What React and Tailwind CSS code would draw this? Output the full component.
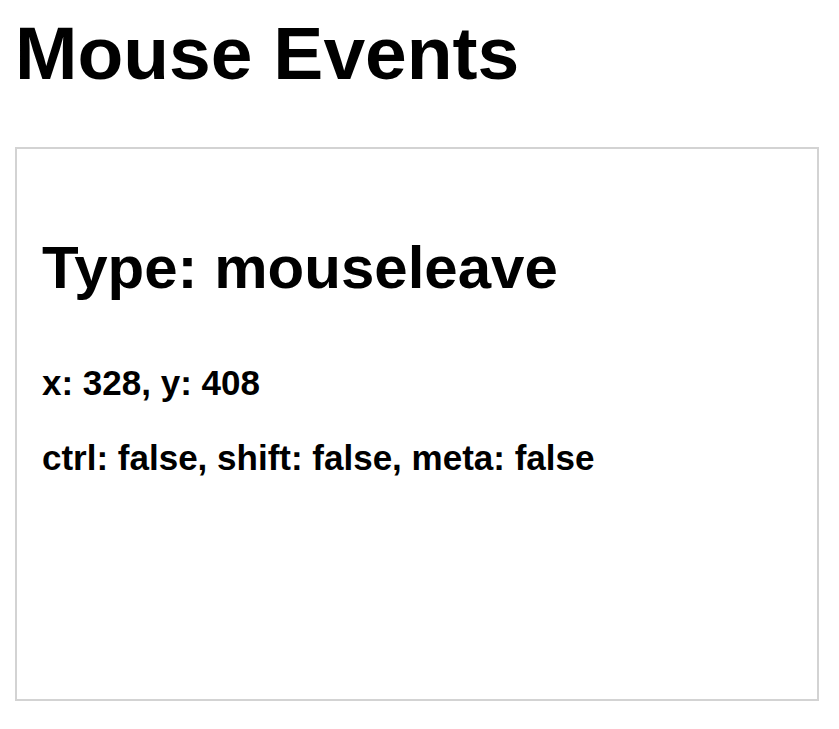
export default function App() {
  return (
    <div className="min-h-screen bg-white text-black font-['Liberation_Sans',Arial,sans-serif] pl-[15px] pt-[10px]">
      <h1 className="text-[75px] font-bold leading-[86px]">Mouse Events</h1>
      <div className="mt-[51px] w-[804px] h-[554px] border-2 border-[#d3d3d3] pl-[25px] pt-[84px]">
        <h2 className="text-[60px] font-bold leading-[69px]">Type: mouseleave</h2>
        <p className="mt-[61px] text-[35px] font-bold leading-[40px]">x: 328, y: 408</p>
        <p className="mt-[35px] text-[35px] font-bold leading-[40px]">ctrl: false, shift: false, meta: false</p>
      </div>
    </div>
  );
}
